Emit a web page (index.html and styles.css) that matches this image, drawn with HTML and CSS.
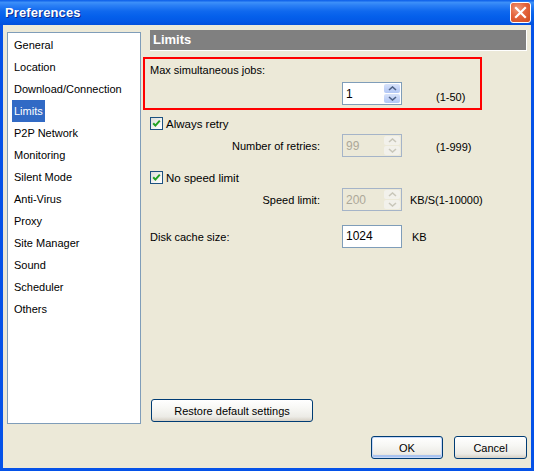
FILE: index.html
```html
<!DOCTYPE html>
<html>
<head>
<meta charset="utf-8">
<link rel="stylesheet" href="styles.css">
</head>
<body>
<div class="window">
  <div class="titlebar">
    <span class="title">Preferences</span>
    <span class="close">
      <svg width="21" height="21" viewBox="0 0 21 21">
        <path d="M6 6 L15 15 M15 6 L6 15" stroke="#fff" stroke-width="2.2" stroke-linecap="square"/>
      </svg>
    </span>
  </div>
  <div class="client">
    <div class="main">
      <ul class="list">
        <li class="item">General</li>
        <li class="item">Location</li>
        <li class="item">Download/Connection</li>
        <li class="item selected">Limits</li>
        <li class="item">P2P Network</li>
        <li class="item">Monitoring</li>
        <li class="item">Silent Mode</li>
        <li class="item">Anti-Virus</li>
        <li class="item">Proxy</li>
        <li class="item">Site Manager</li>
        <li class="item">Sound</li>
        <li class="item">Scheduler</li>
        <li class="item">Others</li>
      </ul>
      <div class="panel">
        <div class="header">Limits</div>
        <div class="redbox">
          <div class="boxlabel">Max simultaneous jobs:</div>
          <div class="boxrow">
            <div class="spin">
              <span class="value">1</span>
              <span class="btns">
                <span class="sbtn up"><svg width="9" height="5" viewBox="0 0 9 5"><path d="M1 4 L4.5 1 L8 4" fill="none" stroke="#4D6185" stroke-width="1.6"/></svg></span>
                <span class="sbtn down"><svg width="9" height="5" viewBox="0 0 9 5"><path d="M1 1 L4.5 4 L8 1" fill="none" stroke="#4D6185" stroke-width="1.6"/></svg></span>
              </span>
            </div>
            <span class="range r50">(1-50)</span>
          </div>
        </div>

        <div class="checkrow first">
          <span class="check"><svg width="11" height="11" viewBox="0 0 11 11"><path d="M2.2 5.2 L4.4 7.6 L8.8 2.6" fill="none" stroke="#21A121" stroke-width="2"/></svg></span>
          <span class="checklabel">Always retry</span>
        </div>
        <div class="fieldrow">
          <span class="flabel">Number of retries:</span>
          <div class="spin disabled">
            <span class="value">99</span>
            <span class="btns">
              <span class="sbtn up"><svg width="9" height="5" viewBox="0 0 9 5"><path d="M1 4 L4.5 1 L8 4" fill="none" stroke="#C9C7BA" stroke-width="1.6"/></svg></span>
              <span class="sbtn down"><svg width="9" height="5" viewBox="0 0 9 5"><path d="M1 1 L4.5 4 L8 1" fill="none" stroke="#C9C7BA" stroke-width="1.6"/></svg></span>
            </span>
          </div>
          <span class="range r999">(1-999)</span>
        </div>

        <div class="checkrow second">
          <span class="check"><svg width="11" height="11" viewBox="0 0 11 11"><path d="M2.2 5.2 L4.4 7.6 L8.8 2.6" fill="none" stroke="#21A121" stroke-width="2"/></svg></span>
          <span class="checklabel">No speed limit</span>
        </div>
        <div class="fieldrow">
          <span class="flabel">Speed limit:</span>
          <div class="spin disabled">
            <span class="value">200</span>
            <span class="btns">
              <span class="sbtn up"><svg width="9" height="5" viewBox="0 0 9 5"><path d="M1 4 L4.5 1 L8 4" fill="none" stroke="#C9C7BA" stroke-width="1.6"/></svg></span>
              <span class="sbtn down"><svg width="9" height="5" viewBox="0 0 9 5"><path d="M1 1 L4.5 4 L8 1" fill="none" stroke="#C9C7BA" stroke-width="1.6"/></svg></span>
            </span>
          </div>
          <span class="unit kbs">KB/S(1-10000)</span>
        </div>

        <div class="fieldrow disk">
          <span class="flabel left">Disk cache size:</span>
          <div class="textbox"><span class="value">1024</span></div>
          <span class="unit kb">KB</span>
        </div>

        <button class="btn restore">Restore default settings</button>
      </div>
    </div>
    <div class="footer">
      <button class="btn ok">OK</button>
      <button class="btn cancel">Cancel</button>
    </div>
  </div>
</div>
</body>
</html>
```

FILE: styles.css
```css
* { box-sizing: border-box; }
html, body { margin: 0; padding: 0; }
body {
  font-family: "Liberation Sans", Arial, sans-serif;
  font-size: 11px;
  color: #000;
  background: #ECE9D8;
}
.window {
  width: 534px;
  height: 471px;
  display: flex;
  flex-direction: column;
  background: #0552E8;
}
.titlebar {
  height: 25px;
  flex: none;
  display: flex;
  align-items: center;
  justify-content: space-between;
  padding: 0 3px 0 5px;
  background: linear-gradient(to bottom, #0A5CE8 0%, #3C8FF8 10%, #2A7FF5 22%, #0F68EE 45%, #0560EB 65%, #0358E6 85%, #0250DC 100%);
}
.title {
  color: #fff;
  font-weight: bold;
  font-size: 13px;
  text-shadow: 1px 1px 0 #0A2A8E;
  letter-spacing: 0.1px;
}
.close {
  width: 21px;
  height: 21px;
  border: 1px solid #fff;
  border-radius: 3px;
  background: radial-gradient(circle at 35% 30%, #F09A7A 0%, #E4643C 45%, #CF4A1E 100%);
  display: flex;
  align-items: center;
  justify-content: center;
}
.close svg { display: block; margin: -1px; }
.client {
  flex: 1;
  margin: 0 3px 3px 3px;
  background: #ECE9D8;
  display: flex;
  flex-direction: column;
}
.main {
  display: flex;
  margin-top: 5px;
  height: 394px;
  padding-left: 4px;
}
.list {
  list-style: none;
  margin: 2px 0 0 0;
  padding: 1px 0 0 0;
  width: 134px;
  height: 392px;
  background: #fff;
  border: 1px solid #7F9DB9;
  display: flex;
  flex-direction: column;
  align-items: flex-start;
}
.item {
  height: 22px;
  line-height: 22px;
  margin-left: 4px;
  padding: 0 2px;
  white-space: nowrap;
}
.item.selected {
  background: #316AC5;
  color: #fff;
}
.panel {
  margin-left: 2px;
  width: 384px;
  display: flex;
  flex-direction: column;
}
.header {
  margin-left: 7px;
  height: 21px;
  background: #808080;
  border-right: 1px solid #fff;
  border-bottom: 1px solid #fff;
  color: #fff;
  font-weight: bold;
  font-size: 13px;
  line-height: 20px;
  padding-left: 3px;
}
.redbox {
  margin-top: 6px;
  width: 339px;
  height: 53px;
  border: 2px solid #FF0000;
  padding-left: 5px;
}
.boxlabel {
  margin-top: 5px;
  line-height: 13px;
}
.boxrow {
  display: flex;
  align-items: center;
  margin-top: 5px;
  padding-left: 192px;
}
.spin, .textbox {
  width: 60px;
  height: 23px;
  border: 1px solid #7F9DB9;
  background: #fff;
  display: flex;
  align-items: center;
  justify-content: space-between;
  padding: 1px 1px 1px 3px;
  font-size: 12px;
}
.textbox { align-items: flex-start; padding-top: 2px; }
.value { line-height: 16px; }
.btns {
  width: 16px;
  height: 19px;
  display: flex;
  flex-direction: column;
  gap: 1px;
}
.sbtn {
  flex: 1;
  display: flex;
  align-items: center;
  justify-content: center;
  background: linear-gradient(to bottom, #D8E3FA 0%, #C0D1F7 60%, #B4C8F5 100%);
  border-radius: 2px;
}
.sbtn svg { display: block; }
.spin.disabled {
  background: #ECE9D8;
  border-color: #A5B4C8;
  color: #ACA899;
}
.spin.disabled .sbtn {
  background: #F2F1EB;
}
.range { margin-left: 34px; }
.r50 { margin-top: 6px; }
.r999 { margin-top: 3px; }
.checkrow {
  display: flex;
  align-items: center;
  height: 13px;
  margin-left: 7px;
}
.checkrow.first { margin-top: 7px; }
.checkrow.second { margin-top: 14px; }
.check {
  width: 13px;
  height: 13px;
  border: 1px solid #1C5180;
  background: linear-gradient(135deg, #DCDCD7 0%, #F4F4F2 60%, #FFFFFF 100%);
  display: flex;
  align-items: center;
  justify-content: center;
}
.check svg { display: block; }
.checklabel {
  margin-left: 3px;
  font-size: 11.5px;
}
.fieldrow {
  display: flex;
  align-items: center;
  margin-top: 4px;
  margin-left: 7px;
}
.fieldrow.disk { margin-top: 14px; }
.flabel {
  width: 170px;
  text-align: right;
  margin-right: 22px;
  font-size: 11px;
}
.flabel.left { text-align: left; }
.unit { margin-left: 8px; }
.unit.kb { margin-left: 10px; }
.btn {
  font-family: "Liberation Sans", Arial, sans-serif;
  font-size: 11px;
  color: #000;
  height: 23px;
  border: 1px solid #003C74;
  border-radius: 3px;
  background: linear-gradient(to bottom, #FFFFFF 0%, #F7F7F4 40%, #ECEBE6 80%, #D6D0C5 100%);
  padding: 0;
  cursor: default;
}
.restore {
  margin-top: auto;
  margin-bottom: 2px;
  margin-left: 8px;
  width: 162px;
  align-self: flex-start;
}
.footer {
  display: flex;
  justify-content: flex-end;
  gap: 11px;
  margin-top: 12px;
  padding-right: 4px;
}
.ok {
  width: 72px;
  box-shadow: inset 0 0 0 1px #C6D8F9, inset 0 -2px 0 1px #A9C3F0;
}
.cancel { width: 73px; }
```
